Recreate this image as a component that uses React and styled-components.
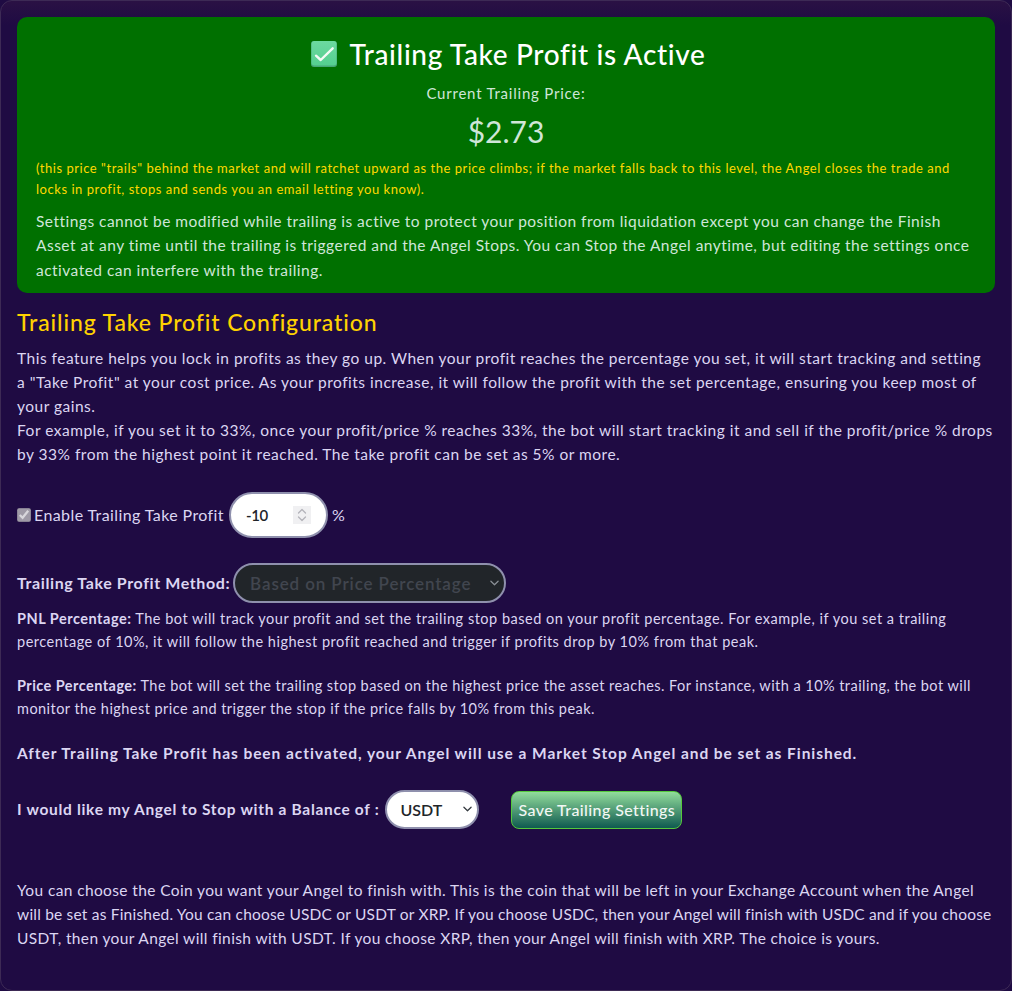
import React from 'react';
import styled, { createGlobalStyle } from 'styled-components';

const GlobalStyle = createGlobalStyle`
  html, body { margin: 0; padding: 0; background: #1f0b43; }
  * { box-sizing: border-box; }
`;

const chevron = color =>
  `url("data:image/svg+xml,%3Csvg xmlns='http://www.w3.org/2000/svg' viewBox='0 0 10 6'%3E%3Cpath d='M1 1l4 4 4-4' fill='none' stroke='${color}' stroke-width='1.4' stroke-linecap='round' stroke-linejoin='round'/%3E%3C/svg%3E")`;

const Panel = styled.div`
  width: 1012px;
  height: 991px;
  padding: 16px;
  background: linear-gradient(#2a1144 0, #1f0b43 24px);
  border: 1px solid #3d2a55;
  border-radius: 12px;
  overflow: hidden;
  font-family: Lato, "Liberation Sans", sans-serif;
  font-size: 16px;
  line-height: 24px;
  color: #dcd6f2;
`;

const ActiveBox = styled.div`
  height: 276px;
  padding: 19px 19px 0;
  background: #007000;
  border-radius: 10px;
  color: #cfe6d8;
`;

const ActiveTitle = styled.h2`
  display: flex;
  align-items: center;
  justify-content: center;
  gap: 13px;
  margin: 0;
  padding-left: 4px;
  height: 36px;
  font-size: 28px;
  font-weight: 500;
  letter-spacing: 0.65px;
  color: #fff;
`;

const CurrentLabel = styled.div`
  margin-top: 9px;
  text-align: center;
  font-size: 15px;
  letter-spacing: 0.78px;
`;

const Price = styled.div`
  margin-top: 6px;
  text-align: center;
  font-size: 30px;
  line-height: 40px;
`;

const TrailNote = styled.p`
  margin: 7px 0 0;
  font-size: 13px;
  line-height: 21px;
  letter-spacing: 0.54px;
  color: #ffd800;
`;

const ActiveText = styled.p`
  margin: 8.5px 0 0;
  font-size: 15.5px;
  line-height: 24.5px;
  letter-spacing: 0.48px;
`;

const SectionTitle = styled.h3`
  margin: 15px 0 0;
  font-size: 23px;
  font-weight: 500;
  line-height: 28px;
  letter-spacing: 0.88px;
  color: #ffd200;
`;

const Intro = styled.p`
  margin: 10px 0 0;
  font-size: 15.5px;
  line-height: 24px;
  letter-spacing: 0.5px;
  white-space: nowrap;
`;

const EnableRow = styled.div`
  display: flex;
  align-items: center;
  margin-top: 26px;
  height: 46px;
  letter-spacing: 0.4px;
`;

const Check = styled.input`
  width: 14px;
  height: 14px;
  margin: 0 3px 0 0;
  accent-color: #5f5375;
`;

const PercentField = styled.div`
  position: relative;
  width: 99px;
  height: 46px;
  margin: 0 4px 0 5px;
`;

const Percent = styled.input`
  width: 100%;
  height: 100%;
  padding: 0 34px 0 15px;
  background: #fff;
  border: 2px solid #8f90ad;
  border-radius: 23px;
  font: 600 15px Lato, sans-serif;
  letter-spacing: -0.4px;
  color: #212529;
  outline: none;
  appearance: textfield;

  &::-webkit-inner-spin-button {
    display: none;
  }
`;

const Spinner = styled.svg`
  position: absolute;
  top: 14px;
  right: 17px;
  width: 18px;
  height: 18px;
  background: #f0f0f2;
  pointer-events: none;
`;

const MethodRow = styled.div`
  display: flex;
  align-items: center;
  margin-top: 25px;
  height: 40px;
  font-weight: 700;
  letter-spacing: 0.6px;
`;

const Select = styled.select`
  height: ${p => p.$height}px;
  width: ${p => p.$width}px;
  margin-left: ${p => p.$gap}px;
  padding: 0 18px 0 ${p => p.$pad}px;
  border: 2px solid #8f90ad;
  border-radius: 20px;
  font: 600 ${p => p.$size}px Lato, sans-serif;
  letter-spacing: ${p => p.$spacing}px;
  appearance: none;
  background-color: ${p => (p.disabled ? '#212529' : '#fff')};
  background-image: ${p => chevron(p.disabled ? '%238a8f95' : '%23343a40')};
  background-repeat: no-repeat;
  background-position: right 5px center;
  background-size: 9px 6px;
  color: ${p => (p.disabled ? '#41464f' : '#212529')};
  opacity: 1;
  outline: none;
`;

const Help = styled.p`
  margin: ${p => p.$top}px 0 0;
  font-size: 14.5px;
  line-height: 23px;
  letter-spacing: ${p => p.$spacing}px;

  strong { font-weight: 700; }
`;

const Finish = styled.p`
  margin: 21px 0 0;
  font-size: 15.5px;
  line-height: 24px;
  font-weight: 700;
  letter-spacing: 0.94px;
`;

const BalanceRow = styled.div`
  display: flex;
  align-items: center;
  margin-top: 24px;
  height: 40px;
  font-weight: 700;
  font-size: 15.5px;
  letter-spacing: 0.69px;
`;

const SaveButton = styled.button`
  width: 171px;
  height: 38px;
  margin: 1px 0 0 32px;
  padding: 0;
  background: linear-gradient(#92dc9b, #0f5a50);
  border: 1px solid #55c83c;
  border-radius: 8px;
  font: 500 16px Lato, sans-serif;
  letter-spacing: 0.4px;
  color: #f2f7f4;
`;

const Outro = styled.p`
  margin: 49px 0 0;
  font-size: 15.5px;
  line-height: 24px;
  letter-spacing: 0.38px;
  white-space: nowrap;
`;

const TightLine = styled.span`
  letter-spacing: 0.2px;
`;

const CheckEmoji = () => (
  <svg width="26" height="26" viewBox="0 0 26 26" aria-hidden="true">
    <defs>
      <linearGradient id="emojiFill" x1="0" y1="0" x2="0" y2="1">
        <stop offset="0" stopColor="#6cd9a0" />
        <stop offset="1" stopColor="#55cf90" />
      </linearGradient>
    </defs>
    <rect x="0" y="0" width="26" height="26" rx="3" fill="#47a878" />
    <rect x="0.5" y="0" width="25" height="24.5" rx="3" fill="url(#emojiFill)" />
    <path d="M5 14.7l4.7 4.3L21.7 7.3" fill="none" stroke="#f4fbf6" strokeWidth="2.4" strokeLinecap="round" strokeLinejoin="round" />
  </svg>
);

export default function App() {
  return (
    <>
      <GlobalStyle />
      <Panel>
        <ActiveBox>
          <ActiveTitle><CheckEmoji /> Trailing Take Profit is Active</ActiveTitle>
          <CurrentLabel>Current Trailing Price:</CurrentLabel>
          <Price>$2.73</Price>
          <TrailNote>
            (this price "trails" behind the market and will ratchet upward as the price climbs; if the market falls back to this level, the Angel closes the trade and<br />
            locks in profit, stops and sends you an email letting you know).
          </TrailNote>
          <ActiveText>
            Settings cannot be modified while trailing is active to protect your position from liquidation except you can change the Finish<br />
            Asset at any time until the trailing is triggered and the Angel Stops. You can Stop the Angel anytime, but editing the settings once<br />
            activated can interfere with the trailing.
          </ActiveText>
        </ActiveBox>

        <SectionTitle>Trailing Take Profit Configuration</SectionTitle>
        <Intro>
          This feature helps you lock in profits as they go up. When your profit reaches the percentage you set, it will start tracking and setting<br />
          a "Take Profit" at your cost price. As your profits increase, it will follow the profit with the set percentage, ensuring you keep most of<br />
          your gains.<br />
          For example, if you set it to 33%, once your profit/price % reaches 33%, the bot will start tracking it and sell if the profit/price % drops<br />
          by 33% from the highest point it reached. The take profit can be set as 5% or more.
        </Intro>

        <EnableRow>
          <Check type="checkbox" checked disabled readOnly />
          Enable Trailing Take Profit
          <PercentField>
            <Percent type="number" defaultValue={-10} />
            <Spinner viewBox="0 0 18 18" aria-hidden="true">
              <path d="M5.5 7L9 3.5 12.5 7M5.5 11L9 14.5 12.5 11" fill="none" stroke="#b4b4ba" strokeWidth="1.3" strokeLinecap="round" strokeLinejoin="round" />
            </Spinner>
          </PercentField>
          %
        </EnableRow>

        <MethodRow>
          Trailing Take Profit Method:
          <Select disabled $width={273} $height={40} $gap={3} $size={17} $pad={15} $spacing={0.88}>
            <option>Based on Price Percentage</option>
          </Select>
        </MethodRow>

        <Help $top={4} $spacing={0.51}>
          <strong>PNL Percentage:</strong> The bot will track your profit and set the trailing stop based on your profit percentage. For example, if you set a trailing<br />
          percentage of 10%, it will follow the highest profit reached and trigger if profits drop by 10% from that peak.
        </Help>
        <Help $top={21} $spacing={0.45}>
          <strong>Price Percentage:</strong> The bot will set the trailing stop based on the highest price the asset reaches. For instance, with a 10% trailing, the bot will<br />
          monitor the highest price and trigger the stop if the price falls by 10% from this peak.
        </Help>

        <Finish>After Trailing Take Profit has been activated, your Angel will use a Market Stop Angel and be set as Finished.</Finish>

        <BalanceRow>
          I would like my Angel to Stop with a Balance of :
          <Select $width={94} $height={39} $gap={6} $size={16} $pad={13} $spacing={0}>
            <option>USDT</option>
            <option>USDC</option>
            <option>XRP</option>
          </Select>
          <SaveButton type="button">Save Trailing Settings</SaveButton>
        </BalanceRow>

        <Outro>
          You can choose the Coin you want your Angel to finish with. This is the coin that will be left in your Exchange Account when the Angel<br />
          <TightLine>will be set as Finished. You can choose USDC or USDT or XRP. If you choose USDC, then your Angel will finish with USDC and if you choose</TightLine><br />
          USDT, then your Angel will finish with USDT. If you choose XRP, then your Angel will finish with XRP. The choice is yours.
        </Outro>
      </Panel>
    </>
  );
}
